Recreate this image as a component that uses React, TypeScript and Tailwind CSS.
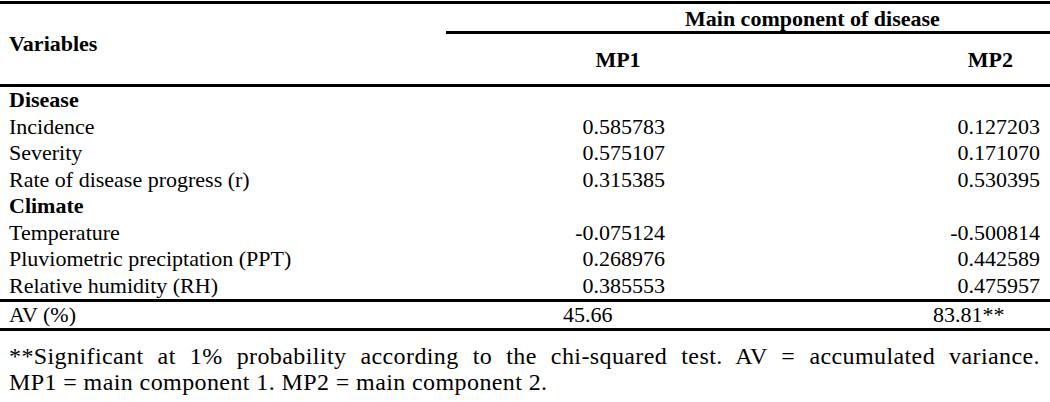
import React from "react";

type Row = { label: string; a?: string; b?: string; bold?: boolean };

const rows: Row[] = [
  { label: "Disease", bold: true },
  { label: "Incidence", a: "0.585783", b: "0.127203" },
  { label: "Severity", a: "0.575107", b: "0.171070" },
  { label: "Rate of disease progress (r)", a: "0.315385", b: "0.530395" },
  { label: "Climate", bold: true },
  { label: "Temperature", a: "-0.075124", b: "-0.500814" },
  { label: "Pluviometric preciptation (PPT)", a: "0.268976", b: "0.442589" },
  { label: "Relative humidity (RH)", a: "0.385553", b: "0.475957" },
];

export default function App() {
  return (
    <div className="w-[1050px] h-[402px] overflow-hidden bg-white text-black font-['Liberation_Serif',serif] text-[22px] leading-none">
      <div className="mt-[1px] border-t-[3px] border-b-[3px] border-black flex">
        <div className="w-[446px] h-[80px] flex items-center pl-[9px] font-bold">Variables</div>
        <div className="flex-1 flex flex-col">
          <div className="h-[30px] border-b-[3px] border-black flex items-center pl-[239px] pt-[3px] font-bold">
            Main component of disease
          </div>
          <div className="h-[50px] flex items-center font-bold pt-[2px]">
            <div className="w-[344px] text-center">MP1</div>
            <div className="flex-1 text-right pr-[37px]">MP2</div>
          </div>
        </div>
      </div>
      <div className="flex flex-col">
        {rows.map((r) => (
          <div key={r.label} className="h-[26.5px] flex items-center">
            <div className={"w-[446px] pl-[9px] " + (r.bold ? "font-bold" : "")}>{r.label}</div>
            <div className="w-[344px] text-right pr-[125px]">{r.a}</div>
            <div className="flex-1 text-right pr-[10px]">{r.b}</div>
          </div>
        ))}
      </div>
      <div className="border-t-[3px] border-b-[3px] border-black h-[32px] flex items-center">
        <div className="w-[446px] pl-[9px]">AV (%)</div>
        <div className="w-[344px] pl-[117px]">45.66</div>
        <div className="flex-1 pl-[143px]">83.81**</div>
      </div>
      <div className="pt-[12px] pl-[9px] pr-[10px] leading-[26px] text-[24px] tracking-[0.4px]">
        <div className="text-justify [text-align-last:justify]">
          **Significant at 1% probability according to the chi-squared test. AV = accumulated variance.
        </div>
        <div>MP1 = main component 1. MP2 = main component 2.</div>
      </div>
    </div>
  );
}
